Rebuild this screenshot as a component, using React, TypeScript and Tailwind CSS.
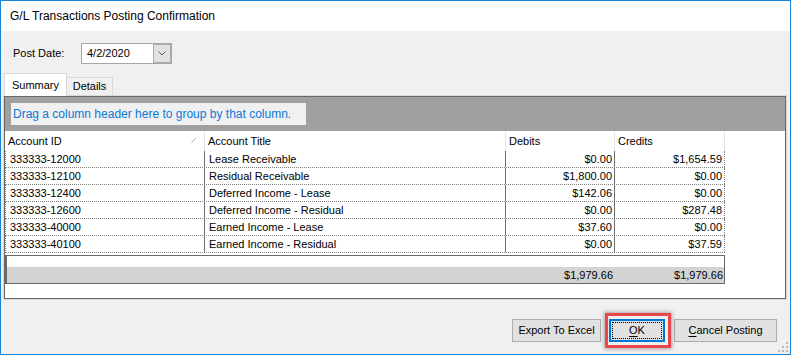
import React from 'react';

const ROWS = [
  { id: '333333-12000', title: 'Lease Receivable', debit: '$0.00', credit: '$1,654.59' },
  { id: '333333-12100', title: 'Residual Receivable', debit: '$1,800.00', credit: '$0.00' },
  { id: '333333-12400', title: 'Deferred Income - Lease', debit: '$142.06', credit: '$0.00' },
  { id: '333333-12600', title: 'Deferred Income - Residual', debit: '$0.00', credit: '$287.48' },
  { id: '333333-40000', title: 'Earned Income - Lease', debit: '$37.60', credit: '$0.00' },
  { id: '333333-40100', title: 'Earned Income - Residual', debit: '$0.00', credit: '$37.59' },
];

function SizeGrip() {
  // the little dotted triangle in the window corner
  const dots = [
    [8, 0],
    [4, 4], [8, 4],
    [0, 8], [4, 8], [8, 8],
  ];
  return (
    <svg width="10" height="10" className="absolute right-[2px] bottom-[2px]">
      {dots.map(([x, y], i) => (
        <rect key={i} x={x} y={y} width="2" height="2" fill="#b9b9b9" />
      ))}
    </svg>
  );
}

export default function App() {
  return (
    <div className="relative w-[791px] h-[355px] overflow-hidden border border-[#1883d7] bg-[#f0f0f0] flex flex-col font-['Liberation_Sans',Arial,sans-serif] text-[11px] text-black">
      {/* title bar */}
      <div className="h-[30px] bg-white flex items-center pl-[9px] text-[12px]">
        G/L Transactions Posting Confirmation
      </div>

      <div className="flex flex-col pt-[12px]">
        {/* post date */}
        <div className="flex items-center h-[21px] pl-[12px]">
          <span className="w-[68px]">Post Date:</span>
          <div className="w-[91px] h-[21px] border border-[#a6a6a6] bg-white flex items-center">
            <span className="flex-1 pl-[5px]">4/2/2020</span>
            <div className="w-[18px] h-[19px] bg-[#e1e1e1] border border-[#adadad] flex items-center justify-center">
              <svg width="8" height="5" viewBox="0 0 8 5">
                <polyline points="0.5,0.5 4,4 7.5,0.5" fill="none" stroke="#5a5a5a" strokeWidth="1" />
              </svg>
            </div>
          </div>
        </div>

        {/* tabs */}
        <div className="mt-[9px] h-[22px] flex items-end pl-[3px]">
          <div className="relative z-10 -mb-px w-[63px] h-[23px] bg-white border border-b-0 border-[#d9d9d9] flex items-center justify-center">
            Summary
          </div>
          <div className="w-[46px] h-[18px] border-t border-r border-[#d9d9d9] flex items-center justify-center">
            Details
          </div>
        </div>

        {/* tab page */}
        <div className="ml-[2px] w-[784px] h-[205px] border border-[#d9d9d9] bg-white">
          <div className="h-full border border-[#696969] flex flex-col bg-white">
            {/* group-by panel */}
            <div className="h-[34px] shrink-0 bg-[#a0a0a0] pt-[6px] pl-[6px]">
              <div className="w-[295px] h-[22px] bg-[#f0f0f0] flex items-center pl-[2px] text-[12px] text-[#0c79d5]">
                Drag a column header here to group by that column.
              </div>
            </div>

            {/* column headers */}
            <div className="flex h-[20px] shrink-0">
              <div className="relative w-[200px] border-r border-[#e6e6e6] pl-[3px] flex items-center">
                Account ID
                <svg width="5" height="5" className="absolute right-[8px] top-[7px]">
                  <line x1="0.5" y1="4.5" x2="4.5" y2="0.5" stroke="#a8a8a8" strokeWidth="1" />
                </svg>
              </div>
              <div className="w-[301px] border-r border-[#e6e6e6] pl-[3px] flex items-center">Account Title</div>
              <div className="w-[109px] border-r border-[#e6e6e6] pl-[3px] flex items-center">Debits</div>
              <div className="w-[110px] border-r border-[#e6e6e6] pl-[3px] flex items-center">Credits</div>
            </div>

            {/* rows */}
            {ROWS.map((r) => (
              <div key={r.id} className="flex h-[17px] w-[720px] shrink-0 border-l border-b border-dotted border-[#7f7f7f]">
                <div className="w-[199px] border-r border-solid border-[#6d6d6d] pl-[4px] flex items-center">{r.id}</div>
                <div className="w-[301px] border-r border-solid border-[#6d6d6d] pl-[4px] flex items-center">{r.title}</div>
                <div className="w-[109px] border-r border-solid border-[#6d6d6d] pr-[2px] flex items-center justify-end">{r.debit}</div>
                <div className="w-[110px] border-r border-dotted border-[#7f7f7f] pr-[2px] flex items-center justify-end">{r.credit}</div>
              </div>
            ))}

            {/* totals */}
            <div className="mt-[2px] w-[720px] h-[29px] shrink-0 border border-l-2 border-[#696969] flex flex-col">
              <div className="h-[14px] bg-white" />
              <div className="flex-1 bg-[#d3d3d3] flex items-center">
                <div className="w-[498px]" />
                <div className="w-[108px] text-right">$1,979.66</div>
                <div className="flex-1 text-right pr-[1px]">$1,979.66</div>
              </div>
            </div>
          </div>
        </div>

        {/* buttons */}
        <div className="mt-[19px] h-[23px] flex justify-end pr-[13px]">
          <button className="w-[89px] h-[23px] bg-[#e1e1e1] border border-[#adadad] flex items-center justify-center">
            Export To Excel
          </button>
          <div className="relative ml-[8px]">
            <button className="relative w-[56px] h-[23px] bg-[#e1e1e1] border-2 border-[#0078d7] flex items-center justify-center">
              <span className="absolute inset-[1px] border border-dotted border-black" />
              <span>
                <span className="underline underline-offset-[2px]">O</span>K
              </span>
            </button>
            <div className="absolute -left-[4px] -right-[6px] -top-[6px] -bottom-[6px] border-[3px] border-[#e8474b] shadow-[0_0_4px_1px_rgba(0,0,0,0.3)] pointer-events-none" />
          </div>
          <button className="ml-[9px] w-[103px] h-[23px] bg-[#e1e1e1] border border-[#adadad] flex items-center justify-center">
            <span>
              <span className="underline underline-offset-[2px]">C</span>ancel Posting
            </span>
          </button>
        </div>
      </div>

      <SizeGrip />
    </div>
  );
}
